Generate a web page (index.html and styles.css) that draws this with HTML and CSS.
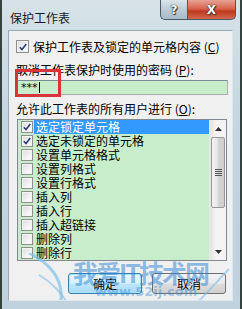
FILE: index.html
```html
<!DOCTYPE html>
<html lang="zh">
<head>
<meta charset="utf-8">
<link rel="stylesheet" href="styles.css">
</head>
<body>
<div class="window">
  <div class="titlebar">
    <span class="title">保护工作表</span>
    <div class="caption-btns">
      <div class="cbtn help"><span>?</span></div>
      <div class="cbtn close"><span>X</span></div>
    </div>
  </div>
  <div class="content">
    <div class="check-row">
      <span class="cb checked"><svg viewBox="0 0 8 8" width="8" height="8"><path d="M0.8 4.2 L3 6.6 L7.3 1" fill="none" stroke="#2a3f78" stroke-width="1.6"/></svg></span>
      <span class="txt">保护工作表及锁定的单元格内容 (<u>C</u>)</span>
    </div>
    <div class="label lbl-pw">取消工作表保护时使用的密码 (<u>P</u>):</div>
    <div class="pw-wrap">
      <div class="pw-input">***<span class="caret"></span></div>
      <div class="redbox"></div>
    </div>
    <div class="label lbl-allow">允许此工作表的所有用户进行 (<u>O</u>):</div>
    <div class="listbox">
      <ul class="items">
        <li class="item"><span class="cb checked"><svg viewBox="0 0 8 8" width="8" height="8"><path d="M0.8 4.2 L3 6.6 L7.3 1" fill="none" stroke="#2a3f78" stroke-width="1.6"/></svg></span><span class="itxt sel">选定锁定单元格</span></li>
        <li class="item"><span class="cb checked"><svg viewBox="0 0 8 8" width="8" height="8"><path d="M0.8 4.2 L3 6.6 L7.3 1" fill="none" stroke="#2a3f78" stroke-width="1.6"/></svg></span><span class="itxt">选定未锁定的单元格</span></li>
        <li class="item"><span class="cb"></span><span class="itxt">设置单元格格式</span></li>
        <li class="item"><span class="cb"></span><span class="itxt">设置列格式</span></li>
        <li class="item"><span class="cb"></span><span class="itxt">设置行格式</span></li>
        <li class="item"><span class="cb"></span><span class="itxt">插入列</span></li>
        <li class="item"><span class="cb"></span><span class="itxt">插入行</span></li>
        <li class="item"><span class="cb"></span><span class="itxt">插入超链接</span></li>
        <li class="item"><span class="cb"></span><span class="itxt">删除列</span></li>
        <li class="item"><span class="cb"></span><span class="itxt">删除行</span></li>
      </ul>
      <div class="scrollbar">
        <div class="arrow up"><svg viewBox="0 0 7 4" width="7" height="4"><path d="M0 4 L3.5 0 L7 4Z" fill="#333"/></svg></div>
        <div class="thumb">
          <div class="grip"><i></i><i></i><i></i><i></i></div>
        </div>
        <div class="track"></div>
        <div class="arrow down"><svg viewBox="0 0 7 4" width="7" height="4"><path d="M0 0 L3.5 4 L7 0Z" fill="#333"/></svg></div>
      </div>
    </div>
    <div class="buttons">
      <div class="btn default">确定</div>
      <div class="btn">取消</div>
    </div>
    <div class="watermark">
      <svg class="swoosh" viewBox="0 0 242 60" width="242" height="60">
        <path d="M28 0 C 52 12, 66 30, 58 58" fill="none" stroke="#7fc0e8" stroke-width="3" opacity="0.7"/>
        <path d="M38 22 C 52 30, 60 40, 68 52" fill="none" stroke="#7fc0e8" stroke-width="2" opacity="0.6"/>
        <path d="M196 50 C 210 36, 220 24, 228 16" fill="none" stroke="#7fc0e8" stroke-width="2" opacity="0.6"/>
      </svg>
      <div class="wm-big">我爱IT技术网</div>
      <div class="wm-small">www.52ij.com</div>
    </div>
  </div>
</div>
</body>
</html>
```

FILE: styles.css
```css
html, body {
  margin: 0;
  padding: 0;
}
body {
  width: 242px;
  height: 309px;
  overflow: hidden;
  background: #34433f;
  font-family: "Noto Sans CJK SC", "Noto Sans", sans-serif;
  font-size: 12px;
  color: #000;
}
.window {
  margin-left: 2px;
  width: 238px;
  height: 309px;
  box-sizing: border-box;
  padding: 0 7px 0 6px;
  background: linear-gradient(180deg, #d6e2e8 0%, #c4d6e0 40%, #bfd2dd 100%);
  display: flex;
  flex-direction: column;
  overflow: hidden;
}
.titlebar {
  height: 30px;
  display: flex;
  justify-content: space-between;
  align-items: flex-start;
  margin-right: -3px;
}
.title {
  margin-top: 10px;
  margin-left: 2px;
  line-height: 16px;
  font-size: 12px;
  color: #1a1a1a;
}
.caption-btns {
  display: flex;
}
.cbtn {
  height: 20px;
  box-sizing: border-box;
  border: 1px solid #4b5966;
  border-top: none;
  display: flex;
  align-items: center;
  justify-content: center;
  font-family: "DejaVu Sans", sans-serif;
  font-weight: bold;
  color: #fff;
}
.cbtn span {
  text-shadow: 0 0 1px #222, 0 0 1px #222, 1px 1px 1px #333;
}
.help {
  width: 27px;
  border-radius: 0 0 0 5px;
  border-right: none;
  background: linear-gradient(180deg, #dbe5ea 0%, #bccbd5 50%, #a8bbc8 100%);
  font-size: 12px;
}
.close {
  width: 49px;
  border-radius: 0 0 5px 0;
  background: linear-gradient(180deg, #e8a393 0%, #d8654f 45%, #c1381f 60%, #d06a4c 100%);
  font-size: 12px;
}
.content {
  position: relative;
  overflow: hidden;
  background: #f0f0f0;
  height: 271px;
  box-sizing: border-box;
  padding: 9px 5px 0 8px;
  border: 1px solid #9aa9b3;
  border-bottom-color: #dfe7ec;
  border-right-color: #dfe7ec;
  flex: none;
}
.check-row {
  display: flex;
  align-items: center;
  height: 13px;
  margin-left: -1px;
}
.cb {
  width: 13px;
  height: 13px;
  box-sizing: border-box;
  border: 1px solid #8f8f8f;
  background: linear-gradient(135deg, #dcdcdc 0%, #f6f6f6 70%, #ffffff 100%);
  box-shadow: inset 0 0 0 1px #f4f4f4;
  display: flex;
  align-items: center;
  justify-content: center;
  flex: none;
}
.txt {
  margin-left: 4px;
  line-height: 13px;
  white-space: nowrap;
}
.label {
  line-height: 14px;
  white-space: nowrap;
  margin-left: -1px;
}
.lbl-pw {
  margin-top: 10px;
}
.pw-wrap {
  position: relative;
  margin-top: 3px;
  margin-right: -1px;
}
.pw-input {
  height: 15px;
  box-sizing: border-box;
  border: 1px solid #abadb3;
  border-top-color: #7a8a99;
  background: #c8edcb;
  line-height: 13px;
  padding-left: 3px;
  font-family: "DejaVu Sans", sans-serif;
  font-size: 11px;
  display: flex;
  align-items: center;
}
.caret {
  display: inline-block;
  width: 1px;
  height: 11px;
  background: #000;
  margin-left: 1px;
}
.redbox {
  position: absolute;
  left: -2px;
  top: -11px;
  width: 46px;
  height: 28px;
  border: 3px solid #d9343a;
  box-sizing: border-box;
}
.lbl-allow {
  margin-top: 7px;
}
.listbox {
  margin-top: 3px;
  height: 142px;
  box-sizing: border-box;
  border: 1px solid #828790;
  background: #c8edcb;
  display: flex;
}
.items {
  list-style: none;
  margin: 0;
  padding: 0;
  flex: 1;
  min-width: 0;
}
.item {
  height: 14px;
  display: flex;
  align-items: center;
  padding-left: 3px;
}
.item .cb {
  width: 12px;
  height: 12px;
}
.itxt {
  flex: 1;
  margin-left: 1px;
  padding-left: 2px;
  height: 14px;
  line-height: 14px;
  white-space: nowrap;
}
.itxt.sel {
  background: #3399ff;
  color: #fff;
}
.scrollbar {
  width: 17px;
  flex: none;
  display: flex;
  flex-direction: column;
  background: linear-gradient(90deg, #e3e3e3 0%, #f4f4f4 40%, #f4f4f4 100%);
  border-left: 1px solid #e8e8e8;
  box-sizing: border-box;
}
.arrow {
  height: 17px;
  display: flex;
  align-items: center;
  justify-content: center;
  flex: none;
}
.thumb {
  height: 69px;
  margin: 0 1px;
  border: 1px solid #979797;
  border-radius: 2px;
  background: linear-gradient(90deg, #f2f2f2 0%, #e6e6e6 45%, #d4d4d4 55%, #cfcfcf 100%);
  display: flex;
  align-items: center;
  justify-content: center;
  flex: none;
}
.grip {
  display: flex;
  flex-direction: column;
  gap: 1px;
}
.grip i {
  display: block;
  width: 7px;
  height: 1px;
  background: #555;
}
.track {
  flex: 1;
}
.buttons {
  display: flex;
  justify-content: flex-end;
  gap: 10px;
  margin-top: 12px;
  margin-right: 1px;
}
.btn {
  width: 74px;
  height: 21px;
  box-sizing: border-box;
  border: 1px solid #707070;
  border-radius: 3px;
  background: linear-gradient(180deg, #f2f2f2 0%, #ebebeb 48%, #dddddd 52%, #cfcfcf 100%);
  display: flex;
  align-items: center;
  justify-content: center;
  line-height: 14px;
}
.btn.default {
  border-color: #3c7fb1;
  box-shadow: inset 0 0 0 1px #a6e5f8;
  background: linear-gradient(180deg, #eaf6fd 0%, #d9f0fc 48%, #bee6fd 52%, #a7d9f5 100%);
}
.watermark {
  position: absolute;
  left: 0;
  top: 222px;
  width: 226px;
  height: 47px;
  pointer-events: none;
}
.swoosh {
  position: absolute;
  left: -8px;
  top: 0;
}
.wm-big {
  position: absolute;
  left: 64px;
  top: 4px;
  font-size: 25px;
  line-height: 30px;
  font-weight: bold;
  letter-spacing: -2px;
  color: rgba(40, 130, 210, 0.5);
  white-space: nowrap;
  font-family: "Noto Sans CJK SC", "DejaVu Sans", sans-serif;
}
.wm-small {
  position: absolute;
  left: 86px;
  top: 32px;
  font-size: 13px;
  line-height: 14px;
  font-weight: bold;
  color: rgba(40, 130, 210, 0.4);
  font-family: "DejaVu Sans", sans-serif;
  white-space: nowrap;
}
```
